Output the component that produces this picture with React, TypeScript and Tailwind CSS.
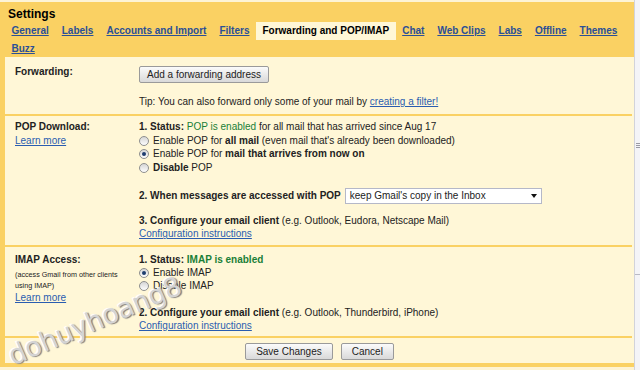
import React from 'react'

const LINK = 'text-[#2a5db0] underline'

function Radio({ checked }: { checked?: boolean }) {
  return (
    <span className="inline-flex h-[10px] w-[10px] shrink-0 items-center justify-center rounded-full border border-[#8e8f8f] bg-linear-to-b from-[#d6d6d6] to-[#fdfdfd]">
      {checked && <span className="h-[4px] w-[4px] rounded-full bg-[#1e3d6e]" />}
    </span>
  )
}

function Btn({ children, className = '' }: { children: React.ReactNode; className?: string }) {
  return (
    <button
      className={
        'block h-[17px] rounded-[2px] border border-[#9a9a9a] bg-linear-to-b from-[#fbfbfb] to-[#d9d9d9] text-[10px] leading-none text-[#222] ' +
        className
      }
    >
      {children}
    </button>
  )
}

const tabs = ['General', 'Labels', 'Accounts and Import', 'Filters', 'Forwarding and POP/IMAP', 'Chat', 'Web Clips', 'Labs', 'Offline', 'Themes']

function Tab({ label }: { label: string }) {
  const active = label === 'Forwarding and POP/IMAP'
  return (
    <span
      className={
        active
          ? 'bg-[#fff7d7] px-[6.5px] font-bold text-black'
          : 'px-[6.5px] font-bold text-[#2a4f96] underline'
      }
    >
      {label}
    </span>
  )
}

function Separator() {
  return <div className="mr-[2px] h-[2px] bg-[#fad163]" />
}

export default function App() {
  return (
    <div className="relative flex h-[370px] w-[640px] overflow-hidden bg-white font-['Liberation_Sans',Arial,sans-serif] text-[10px] text-[#222]">
      <div className="flex w-[634px] flex-col bg-[#fad163]">
        <div className="h-[2px] bg-[#fdf4d6]" />
        <div className="h-[20px] pl-[8px] pt-[4.5px] text-[12px] font-bold leading-[15px] text-black">Settings</div>

        {/* tabs */}
        <div className="flex h-[18px] pl-[5px] leading-[18px]">
          {tabs.map((t) => (
            <Tab key={t} label={t} />
          ))}
        </div>
        <div className="flex h-[17px] pl-[5px] leading-[17px]">
          <Tab label="Buzz" />
        </div>

        <div className="ml-[5px] flex flex-1 flex-col bg-[#fff7d7]">
          {/* Forwarding */}
          <div className="grid h-[57px] grid-cols-[134px_1fr] pt-[8px]">
            <div className="pl-[10px] font-bold leading-[14px]">Forwarding:</div>
            <div>
              <Btn className="mt-[1px] px-[7px]">Add a forwarding address</Btn>
              <div className="mt-[12px] leading-[14px]">
                Tip: You can also forward only some of your mail by <a className={LINK}>creating a filter!</a>
              </div>
            </div>
          </div>
          <Separator />

          {/* POP */}
          <div className="grid h-[129px] grid-cols-[134px_1fr] pt-[4px] leading-[13.7px]">
            <div className="pl-[10px]">
              <div className="font-bold">POP Download:</div>
              <a className={LINK}>Learn more</a>
            </div>
            <div>
              <div>
                <b>1. Status: </b>
                <span className="text-[#1a7f37]">POP is enabled</span> for all mail that has arrived since Aug 17
              </div>
              <div className="flex h-[13.7px] items-center gap-[4px]">
                <Radio />
                <span>
                  Enable POP for <b>all mail</b> (even mail that's already been downloaded)
                </span>
              </div>
              <div className="flex h-[13.7px] items-center gap-[4px]">
                <Radio checked />
                <span>
                  Enable POP for <b>mail that arrives from now on</b>
                </span>
              </div>
              <div className="flex h-[13.7px] items-center gap-[4px]">
                <Radio />
                <span>
                  <b>Disable</b> POP
                </span>
              </div>
              <div className="mt-[13px] flex h-[16px] items-center gap-[4px]">
                <b>2. When messages are accessed with POP</b>
                <div className="flex h-[16px] w-[197px] items-center justify-between border border-[#b5b8c8] bg-white pl-[4px] pr-[4px]">
                  <span>keep Gmail's copy in the Inbox</span>
                  <svg width="6" height="4" viewBox="0 0 6 4">
                    <path d="M0 0h6L3 4z" fill="#111" />
                  </svg>
                </div>
              </div>
              <div className="mt-[10px]">
                <b>3. Configure your email client</b> (e.g. Outlook, Eudora, Netscape Mail)
              </div>
              <a className={LINK}>Configuration instructions</a>
            </div>
          </div>
          <Separator />

          {/* IMAP */}
          <div className="grid h-[89px] grid-cols-[134px_1fr] pt-[6px] leading-[13px]">
            <div className="pl-[10px]">
              <div className="font-bold">IMAP Access:</div>
              <div className="mt-[2.5px] text-[7.2px] leading-[11px]">
                (access Gmail from other clients
                <br />
                using IMAP)
              </div>
              <a className={LINK}>Learn more</a>
            </div>
            <div>
              <div className="font-bold">
                1. Status: <span className="text-[#1a7f37]">IMAP is enabled</span>
              </div>
              <div className="flex h-[13px] items-center gap-[4px]">
                <Radio checked />
                <span>Enable IMAP</span>
              </div>
              <div className="flex h-[13px] items-center gap-[4px]">
                <Radio />
                <span>Disable IMAP</span>
              </div>
              <div className="mt-[13.5px]">
                <b>2. Configure your email client</b> (e.g. Outlook, Thunderbird, iPhone)
              </div>
              <a className={LINK}>Configuration instructions</a>
            </div>
          </div>
          <Separator />

          <div className="flex h-[25px] justify-center gap-[8px] pt-[5px]">
            <Btn className="px-[10px]">Save Changes</Btn>
            <Btn className="px-[10px]">Cancel</Btn>
          </div>
        </div>
        <div className="h-[4px]" />
        <div className="h-[3px] bg-[#fdf3d2]" />
      </div>

      {/* scrollbar edge */}
      <div className="relative w-[6px] border-l border-[#d2d3da] bg-[#f4f4f7]">
        <div className="absolute left-[1px] top-[143px] flex w-[4px] flex-col gap-[1px]">
          <span className="h-px bg-[#9a9aa4]" />
          <span className="h-px bg-[#9a9aa4]" />
          <span className="h-px bg-[#9a9aa4]" />
        </div>
        <div className="absolute left-0 right-0 top-[274px] h-px bg-[#b9bac4]" />
      </div>

      {/* watermark */}
      <div className="pointer-events-none absolute left-[-6px] top-[305px] w-[202px] -rotate-[23deg] text-center font-['DejaVu_Sans',sans-serif] text-[27px] leading-[32px] text-[#d4d4d4] [text-shadow:1px_1px_1px_#7d7d7d,-1px_-1px_0_#fff]">
        dohuyhoang8
      </div>
    </div>
  )
}
